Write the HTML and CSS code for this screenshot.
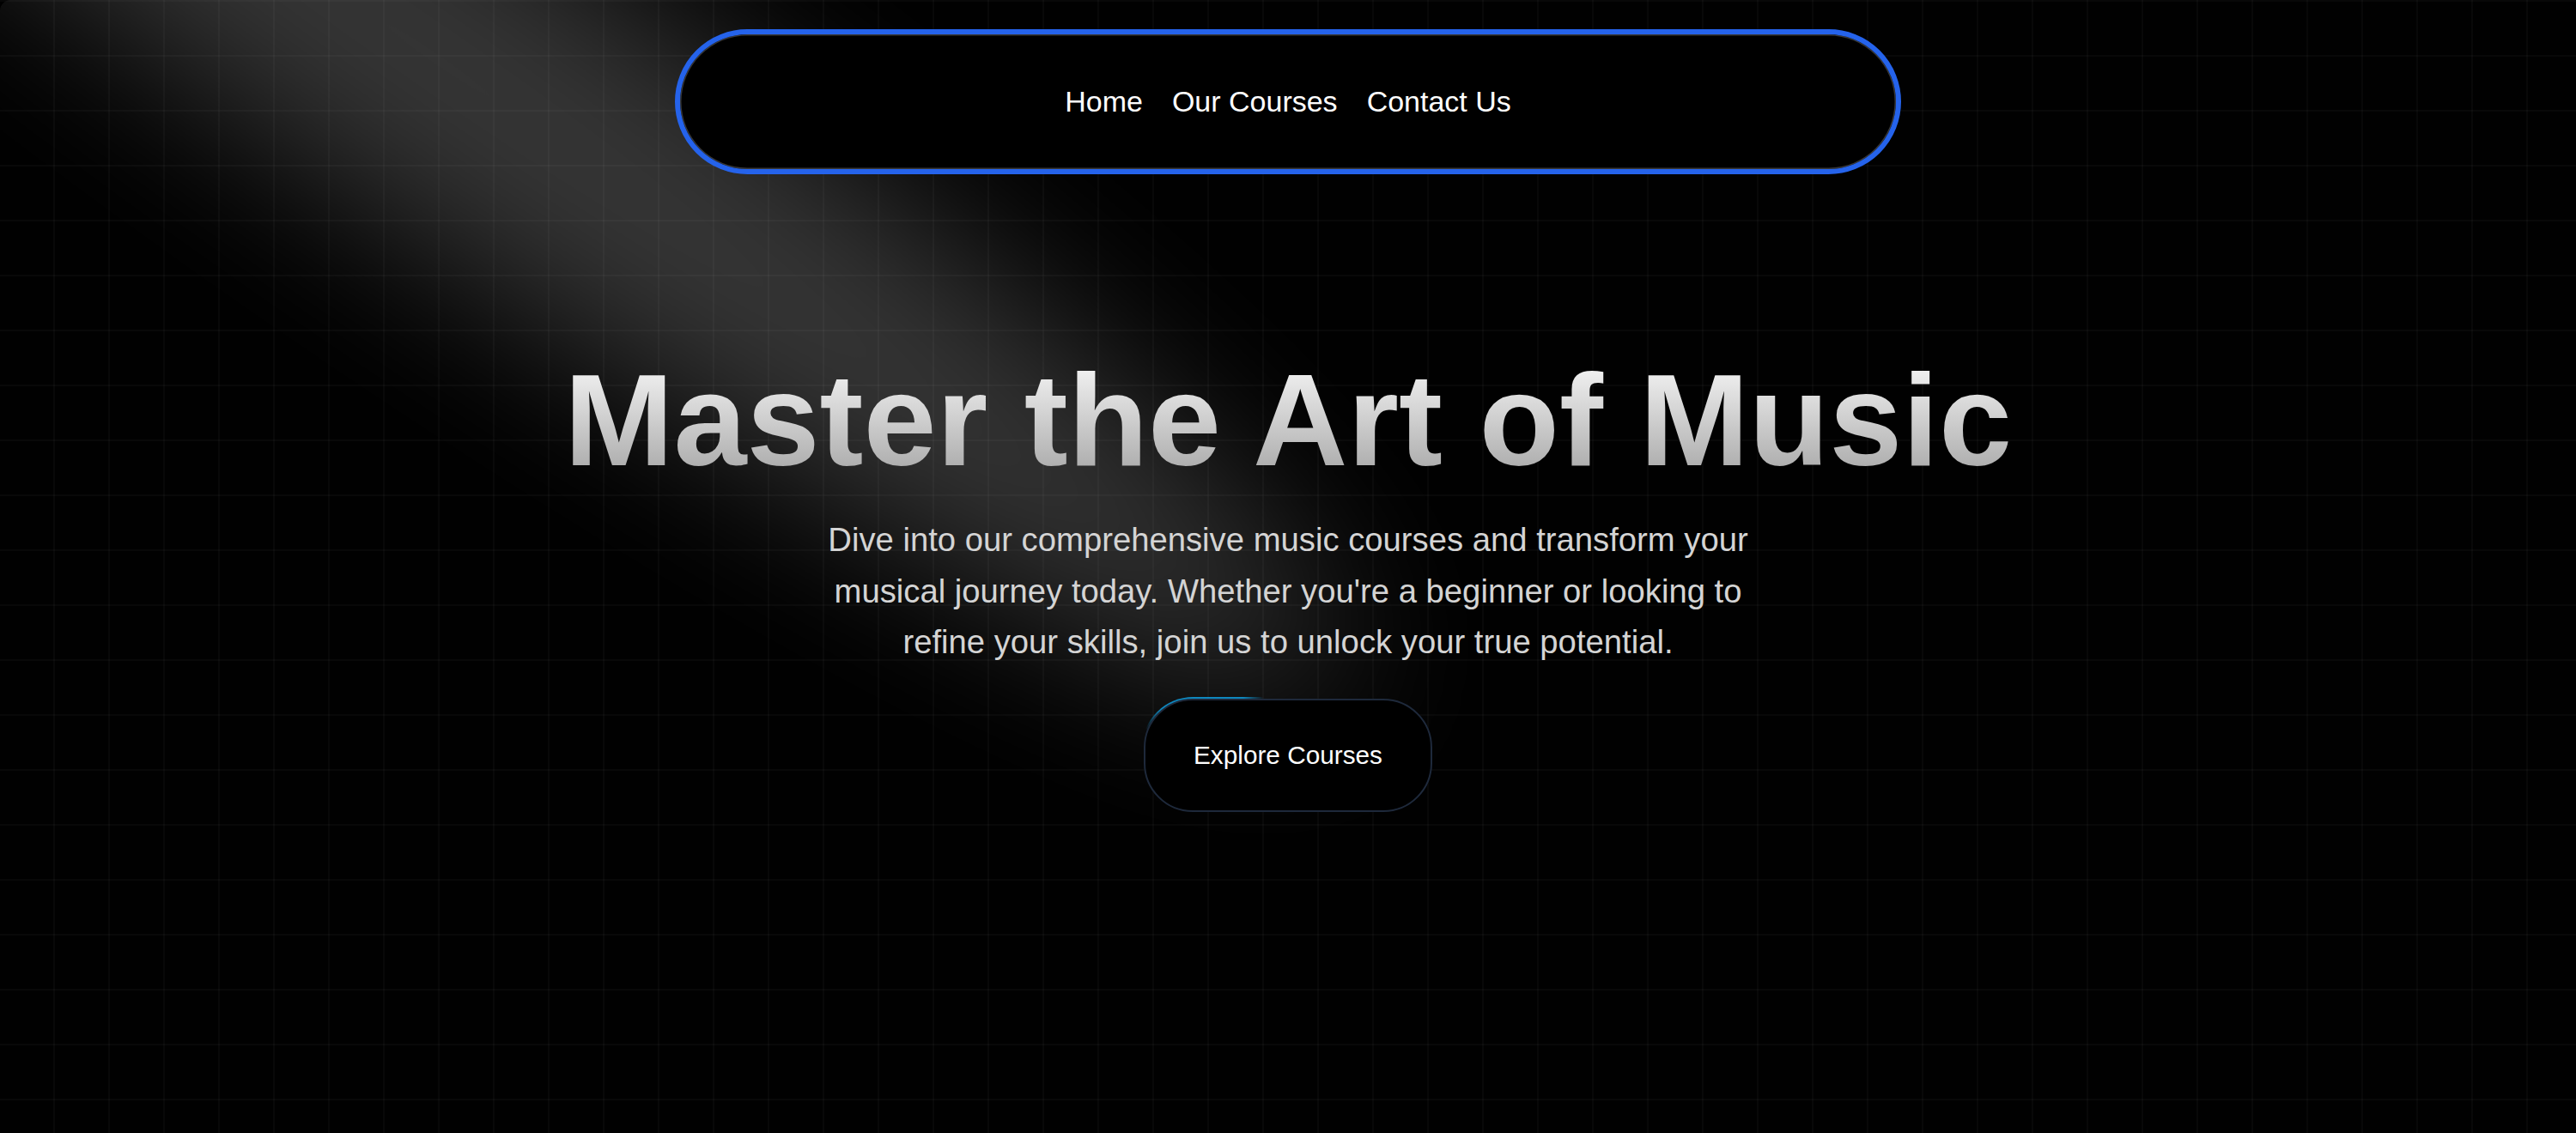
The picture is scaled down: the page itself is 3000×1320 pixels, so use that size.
FILE: index.html
```html
<!DOCTYPE html>
<html lang="en">
<head>
<meta charset="utf-8">
<title>Music School</title>
<link rel="stylesheet" href="styles.css">
</head>
<body>
<nav class="navbar">
  <a class="menu-item" href="#">Home</a>
  <a class="menu-item" href="#">Our Courses</a>
  <a class="menu-item" href="#">Contact Us</a>
</nav>
<main class="page">
  <section class="hero">
    <svg class="spotlight" viewBox="0 0 3000 1360" preserveAspectRatio="none" fill="none" aria-hidden="true">
      <defs>
        <filter id="spotblur" x="-2000" y="-2000" width="7000" height="6000" filterUnits="userSpaceOnUse" color-interpolation-filters="sRGB">
          <feGaussianBlur stdDeviation="100"/>
        </filter>
      </defs>
      <g filter="url(#spotblur)">
        <ellipse cx="510" cy="70" rx="1281" ry="186" transform="rotate(34.68 510 70)" fill="#ffffff" fill-opacity="0.21"/>
      </g>
    </svg>
    <div class="hero-content">
      <h1 class="hero-title">Master the Art of Music</h1>
      <p class="hero-text">Dive into our comprehensive music courses and transform your musical journey today. Whether you're a beginner or looking to refine your skills, join us to unlock your true potential.</p>
      <div class="hero-action">
        <a class="moving-button" href="#">
          <span class="moving-glow"></span>
          <span class="moving-inner">Explore Courses</span>
        </a>
      </div>
    </div>
  </section>
</main>
</body>
</html>
```

FILE: styles.css
```css
html, body {
  margin: 0;
  padding: 0;
  background: #000;
}

body {
  font-family: "Liberation Sans", Arial, sans-serif;
  color: #fff;
}

.page {
  min-height: 100vh;
  background-color: #010101;
  background-image:
    linear-gradient(to bottom, rgba(255, 255, 255, 0.026) 0, rgba(255, 255, 255, 0.026) 2px, transparent 2px),
    linear-gradient(to right, transparent 62px, rgba(255, 255, 255, 0.026) 62px, rgba(255, 255, 255, 0.026) 64px);
  background-size: 64px 64px;
}

.navbar {
  position: fixed;
  top: 34px;
  left: 0;
  right: 0;
  margin: 0 auto;
  width: 1428px;
  height: 169px;
  box-sizing: border-box;
  border: 6px solid #2563eb;
  border-radius: 9999px;
  background: #000;
  box-shadow: inset 0 0 0 1.5px rgba(255, 255, 255, 0.22);
  display: flex;
  justify-content: center;
  align-items: center;
  gap: 34px;
  z-index: 50;
}

.menu-item {
  color: #fff;
  text-decoration: none;
  font-size: 34px;
  line-height: 51px;
}

.hero {
  position: relative;
  height: 1360px;
  overflow: hidden;
  border-radius: 12.75px;
  display: flex;
  flex-direction: column;
  align-items: center;
  justify-content: center;
}

.spotlight {
  position: absolute;
  left: 0;
  top: 0;
  width: 3000px;
  height: 1360px;
  pointer-events: none;
  z-index: 1;
}

.hero-content {
  position: relative;
  z-index: 10;
  width: 100%;
  display: flex;
  flex-direction: column;
  align-items: center;
  text-align: center;
}

.hero-title {
  margin: 0;
  font-size: 153px;
  line-height: 153px;
  font-weight: 700;
  background: linear-gradient(to bottom, #fafafa, #a3a3a3);
  -webkit-background-clip: text;
  background-clip: text;
  color: transparent;
}

.hero-text {
  margin: 34px auto 0;
  max-width: 1088px;
  font-size: 38.25px;
  line-height: 59.5px;
  color: #d4d4d4;
}

.hero-action {
  margin-top: 34px;
}

.moving-button {
  position: relative;
  display: block;
  width: 340px;
  height: 136px;
  padding: 2px;
  box-sizing: border-box;
  border-radius: 59.5px;
  overflow: hidden;
  text-decoration: none;
}

.moving-glow {
  position: absolute;
  left: -15px;
  top: -77px;
  width: 170px;
  height: 170px;
  background: radial-gradient(#0ea5e9 40%, transparent 60%);
  opacity: 0.8;
}

.moving-inner {
  position: relative;
  display: flex;
  align-items: center;
  justify-content: center;
  width: 100%;
  height: 100%;
  box-sizing: border-box;
  background: #000;
  border: 2px solid #1e293b;
  border-radius: 57px;
  color: #fff;
  font-size: 29.75px;
}
```
